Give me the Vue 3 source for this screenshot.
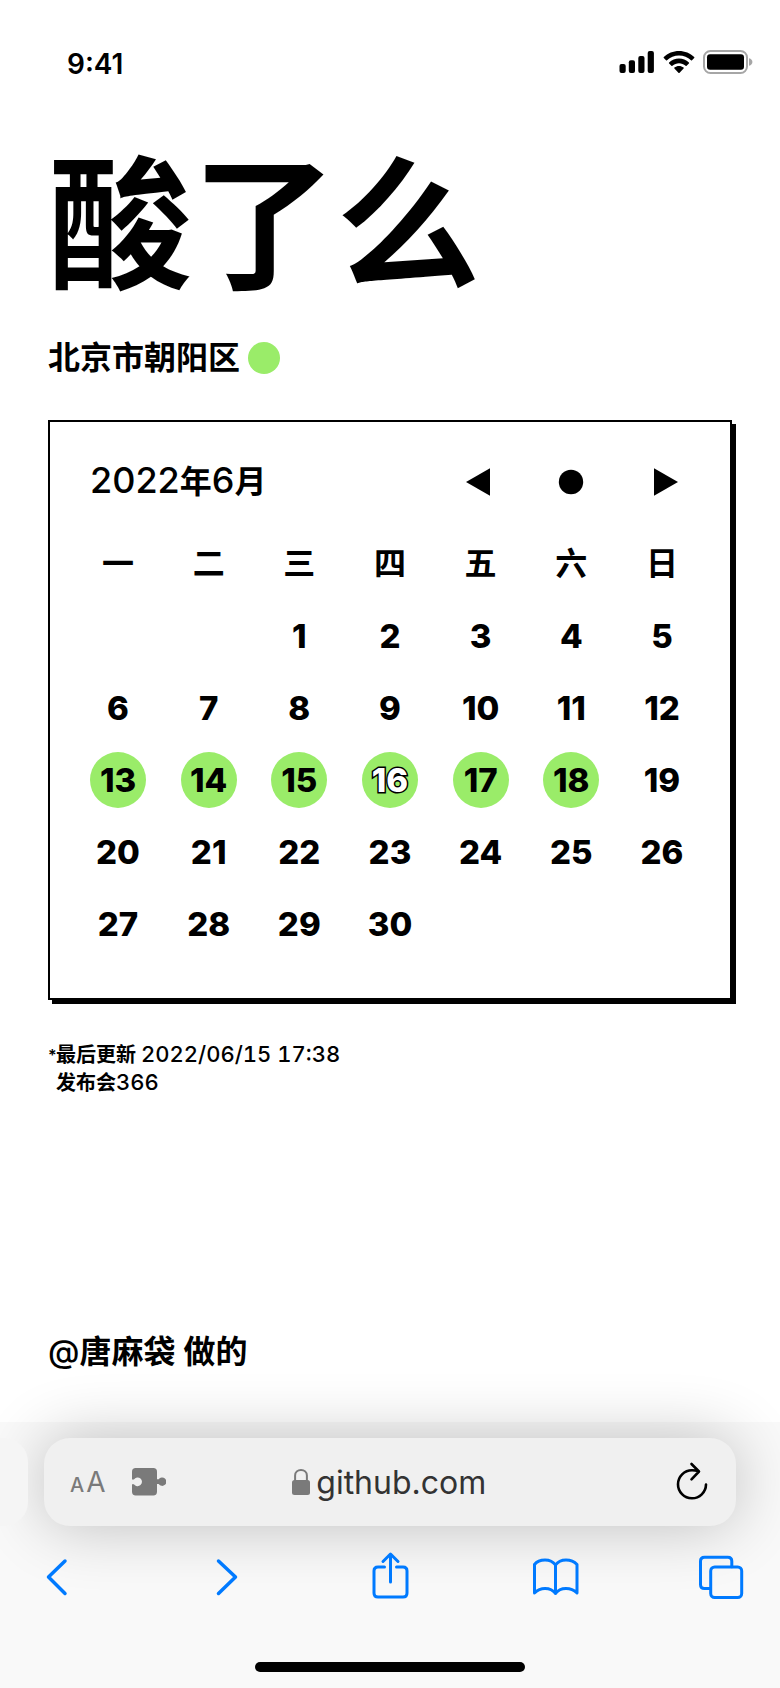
<script setup>
const weekdays = ['一', '二', '三', '四', '五', '六', '日']
const leadingBlanks = 2
const daysInMonth = 30
const today = 16
const sourDays = new Set([13, 14, 15, 16, 17, 18])

const cells = [
  ...Array.from({ length: leadingBlanks }, () => null),
  ...Array.from({ length: daysInMonth }, (_, i) => i + 1),
]
while (cells.length % 7) cells.push(null)

const weeks = []
for (let i = 0; i < cells.length; i += 7) weeks.push(cells.slice(i, i + 7))
</script>

<template>
  <div class="screen">
    <header class="status">
      <time class="clock">9:41</time>
      <div class="indicators">
        <svg width="36" height="24" viewBox="0 0 36 24" aria-hidden="true">
          <rect x="0.5" y="14" width="6.2" height="9" rx="2" />
          <rect x="9.8" y="10.2" width="6.2" height="12.8" rx="2" />
          <rect x="19.3" y="6" width="6.2" height="17" rx="2" />
          <rect x="28.7" y="1" width="6.2" height="22" rx="2" />
        </svg>
        <svg width="32" height="24" viewBox="0 0 32 24" aria-hidden="true">
          <path d="M16 1C10.200 1 4.700 3.300.800 7.100q-.5.500 0 1L3 10.300q.5.500 1 0C7.200 7.300 11.400 5.600 16 5.600s8.800 1.700 12 4.700q.5.500 1 0l2.200-2.200q.5-.5 0-1C27.300 3.300 21.800 1 16 1z" />
          <path d="M16 8.600c-3.700 0-7.200 1.400-9.900 3.900q-.5.500 0 1l2.300 2.200q.5.500 1 0c1.900-1.600 4.200-2.500 6.600-2.500s4.700.9 6.600 2.500q.5.500 1 0l2.300-2.200q.5-.5 0-1C23.200 10 19.700 8.600 16 8.600z" />
          <path d="M16 16c-1.700 0-3.300.600-4.600 1.600q-.5.500 0 1l4 4.100q.6.600 1.200 0l4-4.100q.5-.5 0-1C19.300 16.600 17.700 16 16 16z" />
        </svg>
        <svg width="50" height="26" viewBox="0 0 50 26" aria-hidden="true">
          <rect x="1" y="2" width="43" height="22" rx="6.500" fill="none" stroke="#a6a6a6" stroke-width="2" />
          <rect x="4" y="5.200" width="37" height="15.600" rx="3" />
          <path d="M46 9.200q3.400 1 3.400 3.800T46 16.800z" fill="#a6a6a6" />
        </svg>
      </div>
    </header>

    <main class="page">
      <h1 class="title">酸了么</h1>
      <p class="place">北京市朝阳区<span class="dot"></span></p>

      <section class="card">
        <div class="card-head">
          <h2 class="month"><span class="num">2022</span>年<span class="num">6</span>月</h2>
          <button class="nav" type="button" aria-label="上个月">
            <svg width="56" height="56" viewBox="0 0 56 56"><path d="M13 28 37 14.300V41.700z" /></svg>
          </button>
          <button class="nav" type="button" aria-label="今天">
            <svg width="56" height="56" viewBox="0 0 56 56"><circle cx="28" cy="28" r="12.200" /></svg>
          </button>
          <button class="nav" type="button" aria-label="下个月">
            <svg width="56" height="56" viewBox="0 0 56 56"><path d="M44 28 20 14.300V41.700z" /></svg>
          </button>
        </div>

        <table class="calendar">
          <thead>
            <tr class="week">
              <th v-for="w in weekdays" :key="w" class="weekday" scope="col">{{ w }}</th>
            </tr>
          </thead>
          <tbody>
            <tr v-for="(week, i) in weeks" :key="i" class="week">
              <td
                v-for="(day, j) in week"
                :key="j"
                class="day"
                :class="{ sour: sourDays.has(day), today: day === today }"
              >{{ day }}</td>
            </tr>
          </tbody>
        </table>
      </section>

      <div class="notes">
        <span class="star">*</span>
        <p>最后更新 <span class="stamp">2022/06/15 17:38</span><br />发布会<span class="stamp">366</span></p>
      </div>

      <footer class="credit"><span class="at">@</span>唐麻袋 做的</footer>
    </main>

    <div class="browser">
      <div class="tabs">
        <div class="prev-tab"></div>
        <div class="address">
          <button class="text-size" type="button" aria-label="文字大小"><span class="small-a">A</span>A</button>
          <button class="extension" type="button" aria-label="扩展">
            <svg width="36" height="32" viewBox="0 0 36 32">
              <path d="M5.700 2h17.600q3.700 0 3.700 3.700v7.600h1.700a4.200 4.200 0 1 1 0 4.800H27v7.600q0 3.700-3.700 3.700H5.700Q2 29.400 2 25.700v-7.500h1.900a4.400 4.400 0 1 0 0-4.800H2V5.700Q2 2 5.700 2z" />
            </svg>
          </button>
          <a class="site" href="https://github.com">
            <svg width="18" height="28" viewBox="0 0 18 28" aria-hidden="true">
              <rect x="0" y="12" width="18" height="15" rx="2.500" />
              <path d="M3.100 13V7.500C3.100 4 5.700 2 9 2s5.900 2 5.900 5.500V13" fill="none" stroke="currentColor" stroke-width="2" />
            </svg>
            <span class="host">github.com</span>
          </a>
          <button class="reload" type="button" aria-label="重新载入">
            <svg width="36" height="44" viewBox="0 0 36 44">
              <path d="M32 24.500a14 14 0 1 1-14-14.200q3 0 6.200.8M17.500 4l7.500 7.500-7.500 7.800" />
            </svg>
          </button>
        </div>
      </div>

      <nav class="toolbar">
        <button type="button" aria-label="后退">
          <svg class="chevron" width="56" height="56" viewBox="0 0 56 56"><path d="M37 12 20.500 28 37 44.500" /></svg>
        </button>
        <button type="button" aria-label="前进">
          <svg class="chevron" width="56" height="56" viewBox="0 0 56 56"><path d="M24.500 12 41.500 28 24.500 44.500" /></svg>
        </button>
        <button type="button" aria-label="分享">
          <svg width="56" height="56" viewBox="0 0 56 56">
            <path d="M23.500 18h-6.500q-4 0-4 4v22q0 4 4 4h25q4 0 4-4V22q0-4-4-4h-6.500M29.500 33V5.500M22 12.500l7.500-7.500 7.500 7.500" />
          </svg>
        </button>
        <button type="button" aria-label="书签">
          <svg width="56" height="56" viewBox="0 0 56 56">
            <path d="M28.500 16C26 12.500 22 11 18 11s-8 1.200-10.500 4.500V44c3-3 6.500-4.500 10.500-4.500s8 1.500 10.500 5c2.500-3.500 6.500-5 10.500-5s8 1.500 11 4.500V15.500C47 12.200 43 11 39 11s-8 1.500-10.500 5zM28.500 16v28.500" />
          </svg>
        </button>
        <button type="button" aria-label="标签页">
          <svg width="56" height="56" viewBox="0 0 56 56">
            <path d="M17.500 39.500h-6q-4 0-4-4V12.200q0-4 4-4h23.300q4 0 4 4v5.500" />
            <rect x="17.700" y="18" width="31" height="30.500" rx="4" />
          </svg>
        </button>
      </nav>

      <div class="home-indicator"></div>
    </div>
  </div>
</template>

<style>
body {
  background: #fff;
}
</style>

<style scoped>
.screen {
  display: flex;
  flex-direction: column;
  min-height: 100vh;
  overflow: hidden;
  background: #fff;
  color: #000;
  font-family: Inter, "Noto Sans CJK SC", sans-serif;
}

h1,
h2,
p {
  margin: 0;
}

svg {
  display: block;
}

button {
  padding: 0;
  border: 0;
  background: none;
  color: inherit;
  font: inherit;
  cursor: pointer;
}

.status {
  display: flex;
  align-items: center;
  justify-content: space-between;
  height: 128px;
  padding: 0 27px 0 67px;
}

.clock {
  font-size: 28px;
  font-weight: 600;
}

.indicators {
  display: flex;
  align-items: center;
  gap: 8px;
  padding-bottom: 4px;
}

.page {
  flex: 1;
  display: flex;
  flex-direction: column;
  padding: 26px 48px 48px;
}

.title {
  font-size: 144px;
  line-height: 144px;
  font-weight: 700;
}

.place {
  display: flex;
  align-items: center;
  gap: 8px;
  margin-top: 38px;
  font-size: 32px;
  line-height: 44px;
  font-weight: 600;
}

.dot {
  width: 32px;
  height: 32px;
  border-radius: 50%;
  background: #9aec69;
}

.card {
  margin-top: 40px;
  padding: 32px 40px 46px;
  border: 2px solid #000;
  box-shadow: 4px 4px 0 #000;
}

.card-head,
.week {
  display: grid;
  grid-template-columns: repeat(7, 56px);
  justify-content: space-between;
  align-items: center;
}

.card-head {
  height: 56px;
}

.month {
  grid-column: 1 / 5;
  font-size: 32px;
  line-height: 56px;
  font-weight: 600;
}

.num {
  font-size: 36px;
  line-height: 36px;
  font-weight: 500;
}

.nav {
  width: 56px;
  height: 56px;
}

.calendar,
.calendar thead,
.calendar tbody {
  display: block;
}

.calendar {
  margin-top: 26px;
}

.calendar tbody .week {
  margin-top: 16px;
}

.weekday,
.day {
  height: 56px;
  padding: 0;
  border-radius: 50%;
  line-height: 56px;
  text-align: center;
}

.weekday {
  font-size: 32px;
  font-weight: 600;
}

.day {
  font-size: 33px;
  font-weight: 800;
}

.sour {
  background: #9aec69;
}

.today {
  color: #fff;
  -webkit-text-stroke: 3px #000;
  paint-order: stroke fill;
}

.notes {
  display: flex;
  margin-top: 41px;
  font-size: 20px;
  line-height: 28px;
  font-weight: 600;
}

.star {
  width: 8px;
  font-size: 16px;
}

.stamp {
  font-size: 22px;
  line-height: 22px;
  font-weight: 500;
  font-variant-numeric: tabular-nums;
}

.credit {
  margin-top: auto;
  font-size: 32px;
  line-height: 44px;
  font-weight: 600;
}

.at {
  font-weight: 500;
}

.browser {
  display: flex;
  flex-direction: column;
  padding: 16px 0;
  background: #f9f9f9;
}

.tabs {
  display: flex;
  gap: 16px;
  padding-right: 44px;
}

.prev-tab {
  width: 28px;
  border-radius: 0 24px 24px 0;
  background: #f5f5f5;
  z-index: 1;
}

.address {
  flex: 1;
  display: flex;
  align-items: center;
  height: 88px;
  padding: 0 26px;
  border-radius: 26px;
  background: #f0f0f0;
  box-shadow: 0 0 64px rgba(0, 0, 0, 0.24);
}

.text-size {
  display: flex;
  align-items: baseline;
  gap: 2px;
  color: #7a7a7a;
  font-size: 28px;
}

.small-a {
  font-size: 20px;
  font-weight: 500;
}

.extension {
  margin-left: 24px;
  color: #7a7a7a;
  fill: currentColor;
}

.site {
  flex: 1;
  display: flex;
  align-items: center;
  justify-content: center;
  gap: 6px;
  margin-right: 61px;
  color: #7a7a7a;
  fill: currentColor;
  text-decoration: none;
}

.host {
  color: #333;
  font-size: 32px;
}

.reload {
  fill: none;
  stroke: #000;
  stroke-width: 2.6;
  stroke-linecap: round;
  stroke-linejoin: round;
}

.toolbar {
  display: flex;
  justify-content: space-between;
  margin-top: 23px;
  padding: 0 31px 0 28px;
  fill: none;
  stroke: #007aff;
  stroke-width: 3;
  stroke-linecap: round;
  stroke-linejoin: round;
}

.chevron {
  stroke-width: 3.5;
}

.home-indicator {
  width: 270px;
  height: 10px;
  margin: 57px auto 0;
  border-radius: 5px;
  background: #000;
}
</style>
